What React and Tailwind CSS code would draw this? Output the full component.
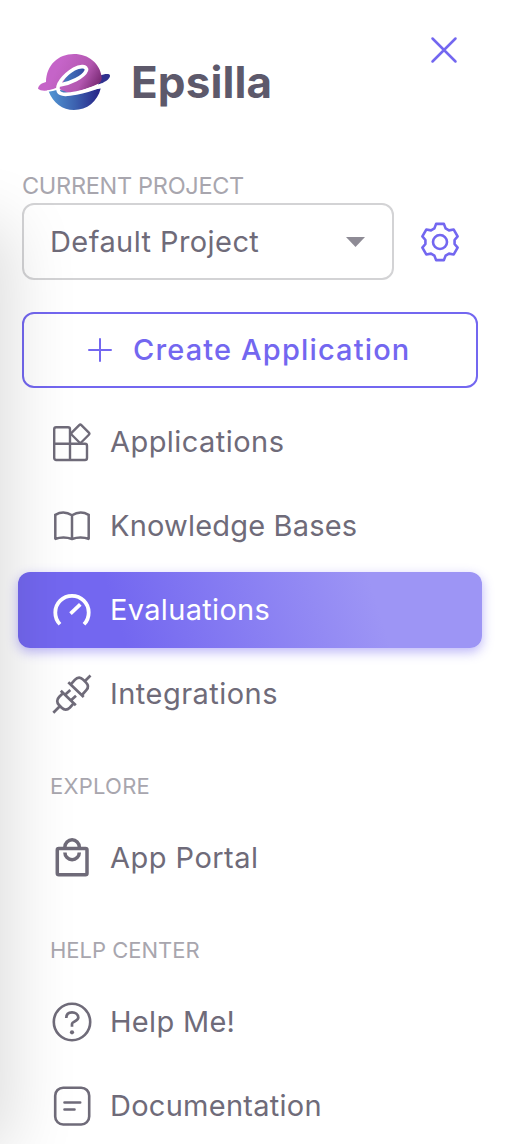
import React from "react";

function Logo() {
  return (
    <svg className="h-[58px] w-[73px] shrink-0" viewBox="0 0 73 58" fill="none">
      <defs>
        <linearGradient id="pink" x1="20" y1="14" x2="60" y2="36" gradientUnits="userSpaceOnUse">
          <stop offset="0" stopColor="#c564c8" />
          <stop offset="0.6" stopColor="#b357b0" />
          <stop offset="1" stopColor="#74266f" />
        </linearGradient>
        <linearGradient id="blue" x1="14" y1="42" x2="60" y2="42" gradientUnits="userSpaceOnUse">
          <stop offset="0" stopColor="#5090cf" />
          <stop offset="0.5" stopColor="#3c62b0" />
          <stop offset="1" stopColor="#28288a" />
        </linearGradient>
      </defs>
      <path d="M10.500 38C15 50 24.500 57 36 57c13 0 23.500-8.500 26.700-21.500L45 38 20 37Z" fill="url(#blue)" />
      <path d="M62 22.500C66 21 71.500 20 72 22.500 72.500 26 66 29.500 60 32Z" fill="#30318f" />
      <path d="M0 35.800C.5 32 4 30 8 29 8.500 12 20 1 36 1c14.500 0 26 9.500 27.700 23 .3 3-1 5.500-3 6.500-8 4-19 8-30 9.500L20 35.500C12 37.500 3 39 0 35.800Z" fill="url(#pink)" />
      <path d="M24.500 31C28 22 36 15.500 44 13.800c4-.3 4 3.500 0 7.200-5 4.500-11 8-19.500 10Z" fill="url(#blue)" />
      <path d="M22 32C32 30.500 46 24 48.300 17.500 49.500 12.500 42 12.500 36 16 26 22 17.500 32 20.500 38.500c2 4 10 3 18 1.500 8-1.500 17-4.500 24.500-7.500" stroke="white" strokeWidth="3.700" strokeLinecap="round" />
      <path d="M9 38.200C13 37.700 17 36.500 20 35" stroke="white" strokeWidth="1.500" />
    </svg>
  );
}

const gearPath =
  "M" +
  [0, 1, 2, 3, 4, 5]
    .flatMap((k) => {
      const a = (k * Math.PI) / 3;
      return [[-5.6, -13.6], [-3.9, -18.1], [3.9, -18.1], [5.6, -13.6]].map(([x, y]) =>
        [24 + x * Math.cos(a) - y * Math.sin(a), 24 + x * Math.sin(a) + y * Math.cos(a)].map((n) => n.toFixed(2)).join(" ")
      );
    })
    .join("L") +
  "Z";

function Gear() {
  return (
    <svg className="ml-[22px] size-12 shrink-0 text-[#7367f0]" viewBox="0 0 48 48" fill="none" stroke="currentColor" strokeWidth="2.600" strokeLinejoin="round">
      <path d={gearPath} />
      <circle cx="24" cy="24" r="7" />
    </svg>
  );
}

function Icon({ children, sw = 2.5 }) {
  return (
    <svg className="size-11 shrink-0" viewBox="0 0 44 44" fill="none" stroke="currentColor" strokeWidth={sw}>
      {children}
    </svg>
  );
}

function Item({ icon, label, active, className }) {
  return (
    <a
      className={
        "flex h-[76px] items-center gap-4 rounded-xl pl-8 text-[29px] " +
        (active
          ? "bg-[linear-gradient(72.47deg,#7367f0_22.16%,#9d95f5_76.47%)] text-white shadow-[0_4px_12px_rgba(115,103,240,0.48)]"
          : "text-[#6f6b79]")
      }
    >
      {icon}
      <span className={"whitespace-nowrap " + className}>{label}</span>
    </a>
  );
}

export default function App() {
  return (
    <div className="relative h-[1144px] w-[506px] overflow-hidden bg-white pr-[6px] font-['Inter',sans-serif]">
      <header className="flex h-[172px] justify-between pl-[38px] pr-[42px]">
        <div className="flex items-center gap-5 self-start pt-[53px]">
          <Logo />
          <span className="text-[44px]/[58px] font-bold tracking-[0.1px] text-[#5d596b]">Epsilla</span>
        </div>
        <svg className="mt-[36px] h-7 w-7" viewBox="0 0 28 28" stroke="#7367f0" strokeWidth="2.500" strokeLinecap="round">
          <path d="M2.500 2.500 25.500 25.500M25.500 2.500 2.500 25.500" />
        </svg>
      </header>

      <section className="px-[22px]">
        <div className="h-[31px] whitespace-nowrap text-[23.5px]/[28px] tracking-[-0.3px] text-[#a8a6ae]">CURRENT PROJECT</div>
        <div className="flex items-center">
          <div className="flex h-[77px] w-[372px] items-center justify-between rounded-xl border-2 border-[#d3d3d5] pl-[26px] pr-[27px] text-[29px] text-[#6f6b79]">
            <span className="whitespace-nowrap pt-px tracking-[0.42px]">Default Project</span>
            <svg className="h-[10px] w-[19px]" viewBox="0 0 19 10">
              <path d="M0 0h19L9.500 10Z" fill="#8e8b95" />
            </svg>
          </div>
          <Gear />
        </div>
        <button className="mt-8 flex h-[76px] w-full items-center rounded-xl border-2 border-[#7367f0] pl-16 text-[29px] font-medium text-[#7367f0]">
          <svg className="mr-[21px] size-6" viewBox="0 0 24 24" stroke="currentColor" strokeWidth="2" strokeLinecap="round">
            <path d="M12 1v22M1 12h22" />
          </svg>
          <span className="whitespace-nowrap tracking-[1.15px]">Create Application</span>
        </button>
      </section>

      <nav className="mt-4 flex flex-col gap-2 px-[18px]">
        <Item
          label="Applications"
          className="tracking-[0.45px]"
          icon={
            <Icon sw={2.4}>
              <path d="M6.200 7.300H18a2 2 0 0 1 2 2V40H6.200a2 2 0 0 1-2-2V9.300a2 2 0 0 1 2-2ZM4.200 23.800H35a2 2 0 0 1 2 2V38a2 2 0 0 1-2 2H20" />
              <rect x="23.500" y="6.900" width="13.600" height="13.600" rx="1.500" transform="rotate(45 30.300 13.700)" />
            </Icon>
          }
        />
        <Item
          label="Knowledge Bases"
          className="tracking-[0.18px]"
          icon={
            <Icon sw={2.5}>
              <path d="M5.300 35.500V10.800c5-2.800 11.500-2.800 16.700.5 5.200-3.300 11.700-3.300 16.700-.5v24.700M4.800 35c5.700-2 11.700-2 17.200 0 5.500-2 11.500-2 17.200 0M22 11v24" />
            </Icon>
          }
        />
        <Item
          active
          label="Evaluations"
          className="tracking-[0.32px]"
          icon={
            <Icon sw={3.8}>
              <path d="M10 36.200A16.700 16.700 0 1 1 34 36.200" />
              <path d="M20.500 25.700 30.300 16.400" strokeWidth="3.700" />
            </Icon>
          }
        />
        <Item
          label="Integrations"
          className="tracking-[0.47px]"
          icon={
            <Icon sw={2.7}>
              <path d="M18.300 10.300 33.700 25M20.800 12.300l4-4.500c3-3.300 6-2.600 8.300-.2l3 3c2.300 2.300 2.500 5 .2 7.600L32 23M34.500 9.500l6-6" />
              <path d="M10.800 18.700 25.800 33.300M13.200 21 9.300 24.700c-2.800 2.800-2.600 6-.3 8.300l2.700 2.700c2.700 2.600 5.500 2.500 8.300-.2l3.200-3.700M14.800 23l5.500-5M20.500 28.700l5.500-5M9.300 34.700l-6 6" />
            </Icon>
          }
        />
      </nav>

      <div className="mt-[40px] pl-[50px] text-[22px]/[28px] tracking-[0.25px] text-[#a8a6ae]">EXPLORE</div>
      <div className="mt-5 px-[18px]">
        <Item
          label="App Portal"
          className="tracking-[0.47px]"
          icon={
            <Icon sw={3.5}>
              <rect x="7.300" y="12.600" width="29.700" height="26.200" rx="1.500" />
              <path d="M14.900 12v-1a7.200 7.200 0 0 1 14.400 0v1M14.900 16.500a7.200 7.200 0 0 0 14.400 0" />
            </Icon>
          }
        />
      </div>

      <div className="mt-[40px] pl-[50px] text-[22px]/[28px] tracking-[0px] text-[#a8a6ae]">HELP CENTER</div>
      <div className="mt-5 flex flex-col gap-2 px-[18px]">
        <Item
          label="Help Me!"
          className="tracking-[0.3px]"
          icon={
            <Icon sw={2.6}>
              <circle cx="22" cy="22" r="18.200" />
              <path d="M16.300 18c0-3.800 2.300-5.600 5.700-5.600s6.300 1.900 6.300 5.200c0 4-6.300 3.700-6.300 6.200v3" strokeWidth="2.700" />
              <circle cx="22" cy="32.300" r="2.100" fill="currentColor" stroke="none" />
            </Icon>
          }
        />
        <Item
          label="Documentation"
          className="tracking-[0.27px]"
          icon={
            <Icon sw={2.6}>
              <rect x="5.200" y="3.700" width="34" height="36.800" rx="8" />
              <path d="M14.500 18.500h15.700M14.500 25.500h10" strokeLinecap="round" />
            </Icon>
          }
        />
      </div>

      <div className="pointer-events-none absolute -left-[300px] top-[235px] h-[905px] w-[300px] shadow-[0_0_64px_10px_rgba(0,0,0,0.14)]" />
    </div>
  );
}
